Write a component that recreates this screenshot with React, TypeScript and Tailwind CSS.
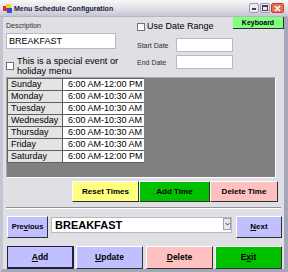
import React from 'react';

const days = [
  { day: 'Sunday', time: '6:00 AM-12:00 PM' },
  { day: 'Monday', time: '6:00 AM-10:30 AM' },
  { day: 'Tuesday', time: '6:00 AM-10:30 AM' },
  { day: 'Wednesday', time: '6:00 AM-10:30 AM' },
  { day: 'Thursday', time: '6:00 AM-10:30 AM' },
  { day: 'Friday', time: '6:00 AM-10:30 AM' },
  { day: 'Saturday', time: '6:00 AM-12:00 PM' },
];

// raised win32 button
function Btn({ className, children }: { className: string; children: React.ReactNode }) {
  return (
    <button
      className={`flex items-center justify-center border border-t-white border-l-white border-r-[#303030] border-b-[#303030] font-bold text-black leading-none ${className}`}
    >
      {children}
    </button>
  );
}

function App() {
  return (
    <div
      className="w-[288px] h-[272px] overflow-hidden flex flex-col bg-[#e0dfe3] text-black"
      style={{ fontFamily: '"Liberation Sans", Arial, sans-serif' }}
    >
      {/* Title bar */}
      <div className="h-[17px] flex items-center bg-linear-to-b from-[#f8f8fa] via-[#e2e2e8] to-[#c6c6d2] border-b border-[#b4b4c4]">
        <svg width="9" height="9" viewBox="0 0 9 9" className="ml-[3px]">
          <rect x="0" y="2" width="4" height="5" fill="#d83030" />
          <rect x="3" y="0" width="5" height="4" fill="#f0d020" />
          <rect x="4" y="4" width="5" height="5" fill="#3050d0" />
        </svg>
        <span className="ml-[2px] text-[7px] font-bold text-[#20203c] leading-none">Menu Schedule Configuration</span>
        <div className="ml-auto mr-[4px] flex gap-px">
          <div className="w-[10px] h-[10px] rounded-[2px] bg-[#eaeaf0] border border-[#9a9ab0] flex items-end pl-[2px] pb-[2px]">
            <div className="w-[4px] h-[2px] bg-[#404050]" />
          </div>
          <div className="w-[10px] h-[10px] rounded-[2px] bg-[#eaeaf0] border border-[#9a9ab0] flex items-center justify-center">
            <div className="w-[6px] h-[6px] border border-[#404050] border-t-2" />
          </div>
          <div className="w-[13px] h-[10px] rounded-[2px] bg-[#e87058] border border-[#c04030] flex items-center justify-center">
            <svg width="7" height="7" viewBox="0 0 7 7">
              <path d="M1 1 L6 6 M6 1 L1 6" stroke="white" strokeWidth="1.4" />
            </svg>
          </div>
        </div>
      </div>

      {/* Body inside frame */}
      <div className="flex-1 flex flex-col border-l-[3px] border-r-[4px] border-b-[3px] border-l-[#c4c4d2] border-r-[#a6a6ba] border-b-[#a6a6ba]">
        {/* Top section */}
        <div className="h-[60px] flex">
          <div className="ml-[3px] w-[110px] flex flex-col">
            <div className="h-[16px] pt-[5px] text-[7px] leading-[8px] text-[#303030]">Description</div>
            <div className="h-[16px] bg-white border border-[#b8b8c4] flex items-center pl-[2px] text-[9px] leading-none">
              BREAKFAST
            </div>
            <div className="mt-[7px] flex items-center">
              <div className="w-[8px] h-[8px] bg-white border border-[#707080] shrink-0" />
              <div className="ml-[3px] text-[9.2px] leading-[10px] font-medium whitespace-nowrap">
                This is a special event or
                <br />
                holiday menu
              </div>
            </div>
          </div>
          <div className="ml-[21px] flex-1 flex flex-col">
            <div className="h-[21px] flex items-start">
              <div className="mt-[6px] w-[8px] h-[8px] bg-white border border-[#707080]" />
              <span className="mt-[5px] ml-[2px] text-[9px] leading-[9px] font-medium">Use Date Range</span>
              <div className="ml-auto w-[51px] h-[12px] bg-[#80ff80] border-b border-r border-[#303030] flex items-center justify-center text-[7px] font-bold leading-none">
                Keyboard
              </div>
            </div>
            <div className="h-[14px] flex items-center">
              <span className="w-[39px] text-[7px] leading-none text-[#303030]">Start Date</span>
              <div className="w-[57px] h-[14px] bg-white border border-[#b8b8c4]" />
            </div>
            <div className="mt-[3px] h-[14px] flex items-center">
              <span className="w-[39px] text-[7px] leading-none text-[#303030]">End Date</span>
              <div className="w-[57px] h-[14px] bg-white border border-[#b8b8c4]" />
            </div>
          </div>
        </div>

        {/* Schedule panel */}
        <div className="ml-[3px] w-[270px] h-[101px] bg-[#808080] border border-t-[#a8a8a8] border-l-[#a8a8a8] border-r-white border-b-white">
          <div className="w-[137px] border-l border-t border-[#606060]">
            {days.map((d) => (
              <div key={d.day} className="h-[12px] flex border-b border-[#606060]">
                <div className="w-[55px] shrink-0 bg-[#e4e4e4] border-r border-[#606060] pl-[3px] text-[9px] leading-[11px] whitespace-nowrap overflow-hidden">
                  {d.day}
                </div>
                <div className="flex-1 bg-white pl-[5px] text-[9px] leading-[11px] whitespace-nowrap overflow-hidden">
                  {d.time}
                </div>
              </div>
            ))}
          </div>
        </div>

        {/* Time buttons */}
        <div className="mt-[3px] ml-[69px] flex h-[21px]">
          <Btn className="w-[67px] bg-[#ffff80] text-[8px]">Reset Times</Btn>
          <Btn className="w-[71px] bg-[#00c000] text-[8px]">Add Time</Btn>
          <Btn className="w-[68px] bg-[#ffc0c0] text-[8px]">Delete Time</Btn>
        </div>

        {/* Separator */}
        <div className="mt-[5px] ml-[3px] w-[275px] border-t border-[#909090] border-b border-b-white" />

        {/* Navigation */}
        <div className="mt-[7px] h-[22px] flex items-start">
          <Btn className="ml-[4px] w-[41px] h-[22px] bg-[#c0c0ff] text-[7.5px]">
            <span>
              Pre<u>v</u>ious
            </span>
          </Btn>
          <div className="ml-[3px] mt-[1px] w-[181px] h-[16px] bg-white border border-[#b8b8c4] flex items-center">
            <span className="pl-[3px] text-[11px] font-bold leading-none">BREAKFAST</span>
            <div className="ml-auto self-start w-[8px] h-[12px] bg-[#e8e8ee] border border-[#a0a0b0] flex items-center justify-center">
              <svg width="5" height="4" viewBox="0 0 5 4">
                <path d="M0.5 1 L2.5 3 L4.5 1" stroke="#404050" strokeWidth="1" fill="none" />
              </svg>
            </div>
          </div>
          <Btn className="ml-[4px] w-[46px] h-[22px] bg-[#c0c0ff] text-[8px]">
            <span>
              <u>N</u>ext
            </span>
          </Btn>
        </div>

        {/* Bottom buttons */}
        <div className="mt-[8px] ml-[4px] h-[23px] flex gap-[2px]">
          <button className="w-[67px] bg-[#c0c0ff] border border-[#202040] border-b-2 border-r-2 flex items-center justify-center text-[8.5px] font-bold leading-none">
            <span>
              <u>A</u>dd
            </span>
          </button>
          <Btn className="w-[67px] bg-[#c0c0ff] text-[8.5px]">
            <span>
              <u>U</u>pdate
            </span>
          </Btn>
          <Btn className="ml-px w-[67px] bg-[#ffc0c0] text-[8.5px]">
            <span>
              <u>D</u>elete
            </span>
          </Btn>
          <Btn className="w-[67px] bg-[#00c000] text-[8.5px]">
            <span>
              E<u>x</u>it
            </span>
          </Btn>
        </div>
      </div>
    </div>
  );
}

export default App;
